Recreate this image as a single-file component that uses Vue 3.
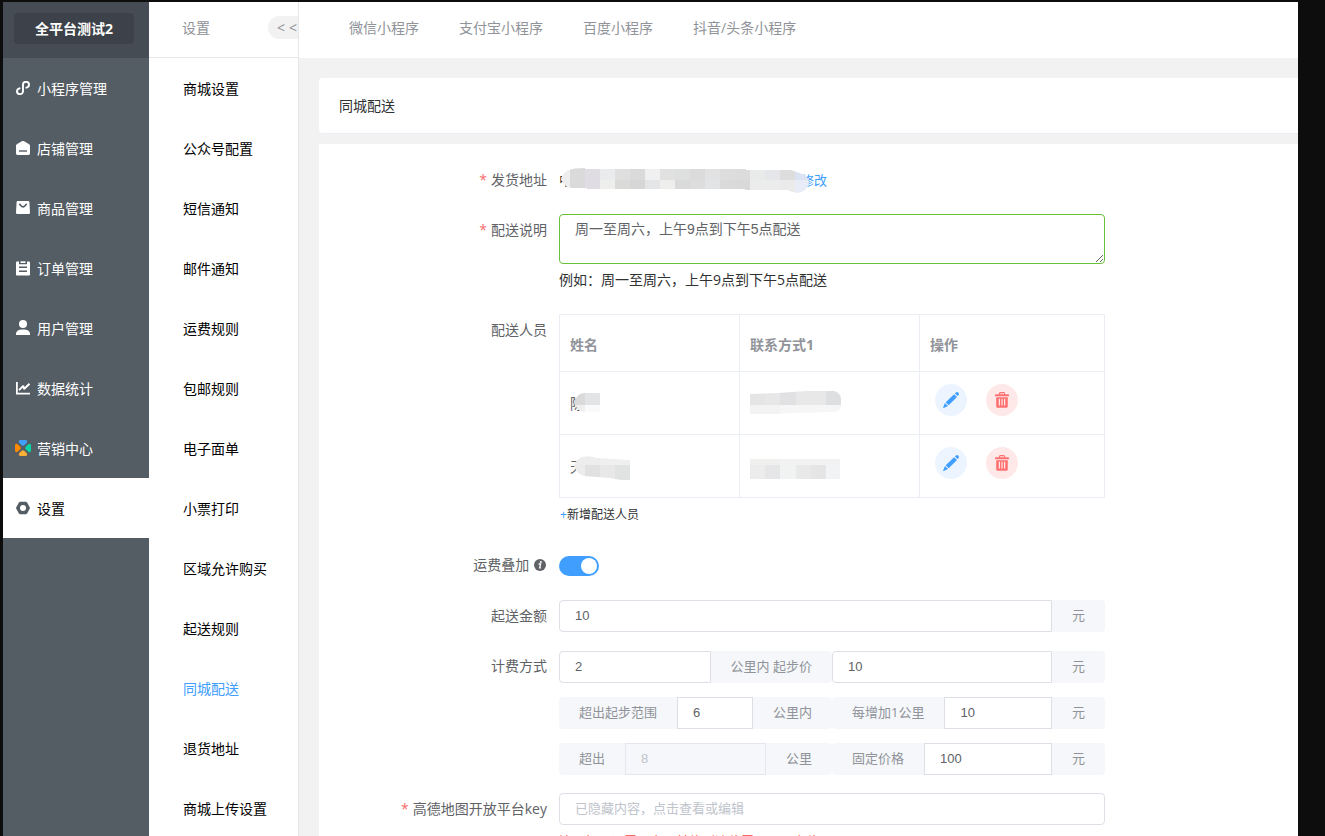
<script setup>
import { ref } from 'vue'

const mainNav = [
  { label: '小程序管理', icon: 'mini' },
  { label: '店铺管理', icon: 'shop' },
  { label: '商品管理', icon: 'goods' },
  { label: '订单管理', icon: 'order' },
  { label: '用户管理', icon: 'user' },
  { label: '数据统计', icon: 'chart' },
  { label: '营销中心', icon: 'market' },
  { label: '设置', icon: 'setting', active: true },
]

const subNav = [
  '商城设置', '公众号配置', '短信通知', '邮件通知', '运费规则', '包邮规则', '电子面单',
  '小票打印', '区域允许购买', '起送规则', '同城配送', '退货地址', '商城上传设置',
]
const currentSub = '同城配送'

const tabs = ['微信小程序', '支付宝小程序', '百度小程序', '抖音/头条小程序']

const note = ref('周一至周六，上午9点到下午5点配送')
const stack = ref(true)
const minAmount = ref('10')
const startKm = ref('2')
const startPrice = ref('10')
const rangeKm = ref('6')
const perKm = ref('10')
const beyondKm = ref('8')
const fixedPrice = ref('100')
const mapKey = ref('')

const addressTop = ['#eeeeee', '#dadada', '#dfdde1', '#eaebec', '#dfdfdf', '#dadada', '#f0f0f0', '#e1e1e1', '#dee0e0', '#dbdbdb', '#e2e2e3', '#dddddd', '#dcdcdc', '#e9ebeb', '#e5e6e9', '#dddddd', '#dbe3f2', '#dbe3f2']
const addressBottom = ['#eeeeee', '#dadada', '#dfdde3', '#eeeeec', '#dadad8', '#d6d6d6', '#e3e5e7', '#eeeeec', '#dadada', '#dddddd', '#e2e3e5', '#dadada', '#d9d9d9', '#ececec', '#ececec', '#eaeaea', '#e8ecf6', '#e8ecf6']

const couriers = [
  {
    name: '陈',
    nameMask: { w: 26, h: 20, path: 'M10 0H26V19H11Q4 19 0 10Q3 0 10 0Z', cells: [[0, 0, 11, 12, '#dadada'], [11, 0, 15, 12, '#e3e4e6'], [0, 12, 11, 8, '#efefef'], [11, 12, 15, 8, '#fafafa']] },
    phoneMask: { w: 91, h: 24, path: 'M0 3L28 2L56 0H84Q91 2 91 8V14Q91 20 84 21L40 22L28 23H0Z', cells: [[0, 0, 15, 14, '#e5e5e5'], [15, 0, 15, 14, '#e7e7e7'], [30, 0, 16, 14, '#e1e1e3'], [46, 0, 30, 14, '#e8e8e8'], [76, 0, 15, 14, '#dedfe1'], [0, 14, 30, 10, '#f3f3f3'], [30, 14, 61, 10, '#f6f6f6']] },
  },
  {
    name: '天',
    nameMask: { w: 56, h: 24, path: 'M8 1Q15 -1 22 2L56 4V24H47L36 22L10 20Q3 18 0 10Q3 2 8 1Z', cells: [[0, 0, 26, 9, '#ededed'], [26, 0, 30, 9, '#efefef'], [0, 9, 11, 15, '#ececec'], [11, 9, 15, 15, '#e1e1e2'], [26, 9, 15, 15, '#e8e8e8'], [41, 9, 15, 15, '#e1e3e2']] },
    phoneMask: { w: 91, h: 26, path: 'M0 6H90V26H0Z', cells: [[0, 6, 30, 6, '#f0f0ef'], [30, 6, 61, 6, '#f2f2f3'], [0, 12, 15, 14, '#ececec'], [15, 12, 15, 14, '#e6e5e8'], [30, 12, 16, 14, '#f1f3f2'], [46, 12, 15, 14, '#e9e9e9'], [61, 12, 15, 14, '#e5e5e5'], [76, 12, 15, 14, '#f2f3f5']] },
  },
]
</script>

<template>
  <div class="frame">
    <div class="app">
      <aside class="side">
        <div class="side-head">
          <button type="button" class="platform">全平台测试2</button>
        </div>
        <nav>
          <a v-for="item in mainNav" :key="item.icon" href="#" class="side-link" :class="{ active: item.active }">
            <span class="side-icon">
              <svg v-if="item.icon === 'mini'" width="14" height="14" viewBox="0 0 14 14" fill="none" stroke="#fff" stroke-width="1.9" stroke-linecap="round">
                <path d="M3.6 7.3C1.9 7.7 1 8.8 1 10.2a3 3 0 0 0 6 0V3.8a3 3 0 0 1 6 0c0 1.4-.9 2.5-2.6 2.9" />
              </svg>
              <svg v-else-if="item.icon === 'shop'" width="14" height="14" viewBox="0 0 14 14">
                <path fill="#fff" d="M5.8.3a2.600 2.600 0 0 1 2.400 0l4.600 2.800c.8.5 1.200 1 1.200 1.900v7.200c0 1.100-.7 1.800-1.800 1.800H1.800C.7 14 0 13.300 0 12.200V5c0-.9.4-1.400 1.200-1.900z" />
                <path stroke="#545c64" stroke-width="1.400" d="M3 10h8" />
              </svg>
              <svg v-else-if="item.icon === 'goods'" width="14" height="14" viewBox="0 0 14 14">
                <path fill="#fff" d="M1.900 0h10.200c.8 0 1.200.4 1.300 1.200l.6 10.300c0 1-.6 1.600-1.600 1.600H1.600C.6 13.100 0 12.500 0 11.500l.6-10.300C.7.400 1.100 0 1.900 0z" />
                <path fill="none" stroke="#545c64" stroke-width="1.600" stroke-linecap="round" d="M3.700 3.300Q7 8.400 10.300 3.300" />
              </svg>
              <svg v-else-if="item.icon === 'order'" width="14" height="15" viewBox="0 0 14 15">
                <path fill="#fff" d="M1.200.6H3v2.600h8V.6h1.800c.7 0 1.200.5 1.200 1.200v11.600c0 .7-.5 1.200-1.200 1.200H1.200C.5 14.600 0 14.100 0 13.400V1.800C0 1.100.5.6 1.200.6z" />
                <path fill="#fff" d="M4.500.3h5v1.700h-5z" />
                <path stroke="#545c64" stroke-width="1.500" d="M3 6.300h8M3 10.300h8" />
              </svg>
              <svg v-else-if="item.icon === 'user'" width="14" height="16" viewBox="0 0 14 16" fill="#fff">
                <circle cx="7" cy="4" r="4" />
                <path d="M0 15v-1C0 11 2.800 9.600 7 9.600S14 11 14 14v1z" />
              </svg>
              <svg v-else-if="item.icon === 'chart'" width="14" height="13" viewBox="0 0 14 13" fill="none" stroke="#fff">
                <path stroke-width="1.800" d="M.9 0v11.600H14" />
                <path stroke-width="1.900" stroke-linejoin="bevel" d="M3 8.200 7.200 3.800 8 7 13.500 1.800" />
              </svg>
              <svg v-else-if="item.icon === 'market'" width="16" height="16" viewBox="0 0 16 16">
                <path fill="#409eff" d="M5.400 0h5.200c1.800 0 2 1.700 1 2.900L9.300 5.300q-1.300 1-2.600 0L4.400 2.900C3.400 1.700 3.600 0 5.400 0z" />
                <path fill="#ff8a00" d="M0 5.400v5.200c0 1.800 1.700 2 2.900 1l2.400-2.300q1-1.300 0-2.600L2.900 4.400C1.700 3.400 0 3.600 0 5.400z" />
                <path fill="#05d5a5" d="M16 5.400v5.200c0 1.800-1.700 2-2.900 1l-2.400-2.300q-1-1.300 0-2.600l2.400-2.300c1.200-1 2.900-.8 2.900 1z" />
                <path fill="#ffb136" d="M5.400 16h5.200c1.800 0 2-1.700 1-2.900l-2.300-2.400q-1.300-1-2.600 0l-2.300 2.400c-1 1.200-.8 2.900 1 2.900z" />
              </svg>
              <svg v-else width="14" height="14" viewBox="0 0 14 14">
                <path fill="#545c64" fill-rule="evenodd" d="M4.200.8h5.600c.6 0 1 .2 1.300.7l2.500 4.500c.4.700.4 1.300 0 2l-2.500 4.500c-.3.500-.7.700-1.300.7H4.200c-.6 0-1-.2-1.300-.7L.4 8C0 7.300 0 6.700.4 6l2.500-4.500C3.200 1 3.600.8 4.200.8zM7 4a3 3 0 1 0 0 6 3 3 0 0 0 0-6z" />
              </svg>
            </span>
            {{ item.label }}
          </a>
        </nav>
      </aside>

      <aside class="sub">
        <div class="sub-head">
          <span>设置</span>
          <button type="button" class="collapse" aria-label="收起"><span>&lt;</span><span>&lt;</span></button>
        </div>
        <nav>
          <a v-for="s in subNav" :key="s" href="#" class="sub-link" :class="{ current: s === currentSub }">{{ s }}</a>
        </nav>
      </aside>

      <main class="main">
        <nav class="tabs">
          <a v-for="t in tabs" :key="t" href="#">{{ t }}</a>
        </nav>
        <div class="body">
          <section class="card title-card">同城配送</section>
          <form class="card form" @submit.prevent>
            <div class="row">
              <span class="label required">发货地址</span>
              <div class="content address">
                <span class="covered">中</span>
                <a href="#" class="edit-link">修改</a>
                <svg class="address-mask" width="250" height="27" viewBox="0 0 250 27">
                  <defs>
                    <clipPath id="addr"><path d="M8 2Q12 0 24 0V1H185V2H230L244 7Q249 12 247 18Q243 25 236 25L228 23V22H184V21H26V20H10Q3 19 0 11Q2 4 8 2Z" /></clipPath>
                  </defs>
                  <g clip-path="url(#addr)">
                    <rect v-for="(c, i) in addressTop" :key="'t' + i" :x="i * 15 - 6" y="0" width="15" height="13" :fill="c" />
                    <rect v-for="(c, i) in addressBottom" :key="'b' + i" :x="i * 15 - 6" y="12" width="15" height="15" :fill="c" />
                  </g>
                </svg>
              </div>
            </div>

            <div class="row">
              <label class="label required" for="note">配送说明</label>
              <div class="content">
                <textarea id="note" v-model="note" class="note"></textarea>
                <div class="hint">例如：周一至周六，上午9点到下午5点配送</div>
              </div>
            </div>

            <div class="row">
              <span class="label">配送人员</span>
              <div class="content">
                <table class="table">
                  <thead>
                    <tr><th>姓名</th><th>联系方式1</th><th>操作</th></tr>
                  </thead>
                  <tbody>
                    <tr v-for="(c, i) in couriers" :key="i">
                      <td>
                        <div class="name">
                          <span class="covered">{{ c.name }}</span>
                          <svg class="name-mask" :width="c.nameMask.w" :height="c.nameMask.h">
                            <defs><clipPath :id="'n' + i"><path :d="c.nameMask.path" /></clipPath></defs>
                            <g :clip-path="'url(#n' + i + ')'">
                              <rect v-for="(r, k) in c.nameMask.cells" :key="k" :x="r[0]" :y="r[1]" :width="r[2]" :height="r[3]" :fill="r[4]" />
                            </g>
                          </svg>
                        </div>
                      </td>
                      <td>
                        <svg class="phone-mask" :width="c.phoneMask.w" :height="c.phoneMask.h">
                          <defs><clipPath :id="'p' + i"><path :d="c.phoneMask.path" /></clipPath></defs>
                          <g :clip-path="'url(#p' + i + ')'">
                            <rect v-for="(r, k) in c.phoneMask.cells" :key="k" :x="r[0]" :y="r[1]" :width="r[2]" :height="r[3]" :fill="r[4]" />
                          </g>
                        </svg>
                      </td>
                      <td>
                        <div class="actions">
                          <button type="button" class="round edit" aria-label="编辑">
                            <svg width="16" height="16" viewBox="0 0 16 16" fill="#409eff">
                              <path d="M12.900.5a1.700 1.700 0 0 1 2.300.1l.3.300c.6.600.6 1.600 0 2.300l-.9.900L11.900 1.400z" />
                              <path d="M11.100 2.200l2.900 2.800-8.300 8.200L2.700 10.300z" />
                              <path d="M2 11l3 3-4.200 1.900c-.5.200-.8-.1-.6-.6z" />
                            </svg>
                          </button>
                          <button type="button" class="round remove" aria-label="删除">
                            <svg width="16" height="16" viewBox="0 0 16 16">
                              <path fill="none" stroke="#ff7070" stroke-width="1.300" d="M5.500 2.500V1.600Q5.500.7 6.400.7h3.200q.9 0 .9.900v.9" />
                              <path fill="#ff7070" d="M1.800 2.300h12.400c.5 0 .8.300.8.800v1.200H1V3.100c0-.5.300-.8.800-.8z" />
                              <path fill="#ff7070" fill-rule="evenodd" d="M2.200 5.300h11.600v9c0 .9-.6 1.500-1.500 1.500H3.700c-.9 0-1.500-.6-1.500-1.500zM4.800 6.800v6.800H6V6.800zM7.400 6.800v6.800h1.200V6.800zM10 6.800v6.800h1.200V6.800z" />
                            </svg>
                          </button>
                        </div>
                      </td>
                    </tr>
                  </tbody>
                </table>
                <button type="button" class="add"><span class="plus">+</span>新增配送人员</button>
              </div>
            </div>

            <div class="row">
              <label class="label" for="stack">运费叠加
                <svg class="info" width="12" height="12" viewBox="0 0 12 12">
                  <circle cx="6" cy="6" r="6" fill="#606266" />
                  <circle cx="6.800" cy="2.900" r="1" fill="#fff" />
                  <path d="M4.600 5h2L5.700 8.900h1.200" fill="none" stroke="#fff" stroke-width="1.300" />
                </svg>
              </label>
              <div class="content switch-line">
                <input id="stack" v-model="stack" type="checkbox" role="switch" class="switch" />
              </div>
            </div>

            <div class="row">
              <label class="label" for="min">起送金额</label>
              <div class="content group">
                <input id="min" v-model="minAmount" class="field" />
                <span class="addon">元</span>
              </div>
            </div>

            <div class="row">
              <label class="label" for="km">计费方式</label>
              <div class="content pricing">
                <div class="group">
                  <input id="km" v-model="startKm" class="field" />
                  <span class="addon">公里内 起步价</span>
                </div>
                <div class="group">
                  <input v-model="startPrice" class="field" aria-label="起步价" />
                  <span class="addon">元</span>
                </div>
                <div class="group">
                  <label class="addon" for="range">超出起步范围</label>
                  <input id="range" v-model="rangeKm" class="field" />
                  <span class="addon">公里内</span>
                </div>
                <div class="group">
                  <label class="addon" for="per">每增加1公里</label>
                  <input id="per" v-model="perKm" class="field" />
                  <span class="addon">元</span>
                </div>
                <div class="group">
                  <label class="addon" for="beyond">超出</label>
                  <input id="beyond" v-model="beyondKm" class="field" disabled />
                  <span class="addon">公里</span>
                </div>
                <div class="group">
                  <label class="addon" for="fixed">固定价格</label>
                  <input id="fixed" v-model="fixedPrice" class="field" />
                  <span class="addon">元</span>
                </div>
              </div>
            </div>

            <div class="row">
              <label class="label required" for="key">高德地图开放平台key</label>
              <div class="content">
                <div class="group">
                  <input id="key" v-model="mapKey" class="field" placeholder="已隐藏内容，点击查看或编辑" />
                </div>
                <div class="warn">注：如需设置，立即前往到达位置，不可定位</div>
              </div>
            </div>
          </form>
        </div>
      </main>
    </div>
  </div>
</template>

<style>
html,
body {
  background: #0d0d0d;
}
body {
  margin: 0;
  overflow: hidden;
}
</style>

<style scoped>
* {
  box-sizing: border-box;
}
.frame {
  height: 100vh;
  padding: 2px 27px 0 3px;
  overflow: hidden;
  background: #0d0d0d;
  font-family: "Open Sans", "Noto Sans CJK SC", sans-serif;
  font-size: 14px;
  color: #303133;
}
button,
input,
textarea {
  margin: 0;
  font-family: inherit;
  font-size: inherit;
}
button {
  padding: 0;
  border: 0;
  background: none;
}
a {
  color: inherit;
  text-decoration: none;
}
svg {
  display: block;
}
.app {
  display: flex;
  height: 100%;
  background: #f2f2f2;
  overflow: hidden;
}

.side {
  flex: none;
  width: 146px;
  background: #545c64;
  color: #fff;
}
.side-head {
  display: flex;
  height: 56px;
  padding: 11px 15px 14px 11px;
  background: #454c54;
}
.platform {
  flex: 1;
  padding-bottom: 2px;
  border-radius: 4px;
  background: #3d424a;
  color: #fff;
  font-weight: 700;
}
.side-link {
  display: flex;
  align-items: center;
  gap: 6px;
  height: 60px;
  padding-left: 12px;
}
.side-link.active {
  background: #fff;
  color: #000;
}
.side-icon {
  display: flex;
  justify-content: center;
  width: 16px;
}

.sub {
  flex: none;
  width: 150px;
  border-right: 1px solid #e6e6e6;
  background: #fff;
  color: #000;
}
.sub-head {
  display: flex;
  align-items: center;
  justify-content: space-between;
  height: 56px;
  padding: 0 0 5px 33px;
  border-bottom: 1px solid #e6e6e6;
  color: #909399;
}
.collapse {
  display: flex;
  align-items: center;
  justify-content: center;
  gap: 4px;
  width: 30px;
  height: 23px;
  padding-left: 8px;
  border-radius: 12px 0 0 12px;
  background: #f2f2f2;
  color: #909399;
}
.sub-link {
  display: flex;
  align-items: center;
  height: 60px;
  padding-left: 34px;
}
.sub-link.current {
  color: #409eff;
}

.main {
  flex: 1;
  min-width: 0;
}
.tabs {
  display: flex;
  align-items: center;
  gap: 40px;
  height: 56px;
  padding: 0 50px 6px;
  background: #fff;
  color: #909399;
}
.body {
  padding: 20px 0 0 20px;
}
.card {
  background: #fff;
}
.title-card {
  padding: 0 20px;
  border-bottom: 1px solid #ebeef5;
  border-radius: 4px 0 0 4px;
  line-height: 55px;
}
.form {
  display: flex;
  flex-direction: column;
  gap: 18px;
  margin-top: 10px;
  padding: 20px 0;
}
.row {
  display: flex;
}
.label {
  flex: none;
  width: 240px;
  padding-right: 12px;
  line-height: 32px;
  text-align: right;
  color: #606266;
}
.required::before {
  content: "*";
  margin-right: 4px;
  color: #f56c6c;
}
.info {
  display: inline-block;
  margin: 0 1px;
  vertical-align: -1px;
}
.content {
  flex: 0 1 546px;
  min-width: 0;
}
.address {
  position: relative;
  display: flex;
  justify-content: space-between;
  line-height: 32px;
}
.edit-link {
  margin-right: 278px;
  font-size: 13px;
  color: #409eff;
}
.address-mask {
  position: absolute;
  left: 2px;
  top: 4px;
}
.note {
  display: block;
  width: 100%;
  height: 50px;
  padding: 4px 15px;
  border: 1px solid #67c23a;
  border-radius: 4px;
  outline: 0;
  font-family: "Liberation Sans", "Noto Sans CJK SC", sans-serif;
  line-height: 20px;
  color: #606266;
  resize: vertical;
}
.hint {
  line-height: 32px;
}
.table {
  width: 100%;
  border-collapse: collapse;
  table-layout: fixed;
}
.table th,
.table td {
  height: 63px;
  padding: 0 10px;
  border: 1px solid #ebeef5;
  text-align: left;
  color: #606266;
}
.table th {
  height: 57px;
  padding-top: 2px;
  font-weight: 700;
  color: #909399;
}
.table th:nth-child(-n + 2) {
  width: 180px;
}
.name {
  position: relative;
}
.name-mask {
  position: absolute;
  left: 4px;
  top: 0;
}
.actions {
  display: flex;
  gap: 19px;
  padding: 0 5px 6px;
}
.round {
  display: flex;
  align-items: center;
  justify-content: center;
  width: 32px;
  height: 32px;
  border-radius: 50%;
}
.edit {
  background: #ecf5ff;
}
.remove {
  background: #fee8e8;
}
.add {
  display: block;
  padding-left: 1px;
  font-size: 12px;
  line-height: 33px;
  color: #303133;
}
.plus {
  color: #409eff;
}
.switch-line {
  display: flex;
  align-items: center;
  height: 33px;
}
.switch {
  display: flex;
  align-items: center;
  justify-content: flex-end;
  width: 40px;
  height: 20px;
  padding: 0 2px;
  border-radius: 10px;
  background: #dcdfe6;
  appearance: none;
}
.switch::before {
  content: "";
  width: 16px;
  height: 16px;
  border-radius: 50%;
  background: #fff;
}
.switch:checked {
  background: #409eff;
}
.group {
  display: flex;
  height: 32px;
}
.field {
  flex: 1;
  width: 0;
  min-width: 0;
  height: 32px;
  padding: 0 15px 2px;
  border: 1px solid #dcdfe6;
  border-radius: 0;
  outline: 0;
  background: #fff;
  font-family: "Liberation Sans", "Noto Sans CJK SC", sans-serif;
  font-size: 13px;
  color: #606266;
}
.field::placeholder {
  color: #c0c4cc;
}
.field:disabled {
  border-color: #e4e7ed;
  background: #f5f7fa;
  color: #c0c4cc;
}
.addon {
  flex: none;
  padding: 0 20px;
  background: #f5f7fa;
  font-size: 13px;
  line-height: 31px;
  color: #909399;
}
.group > :first-child {
  border-top-left-radius: 4px;
  border-bottom-left-radius: 4px;
}
.group > :last-child {
  border-top-right-radius: 4px;
  border-bottom-right-radius: 4px;
}
.pricing {
  display: grid;
  grid-template-columns: 1fr 1fr;
  row-gap: 14px;
  padding-top: 1px;
}
.warn {
  font-size: 13px;
  line-height: 32px;
  color: #f5483b;
}
</style>
